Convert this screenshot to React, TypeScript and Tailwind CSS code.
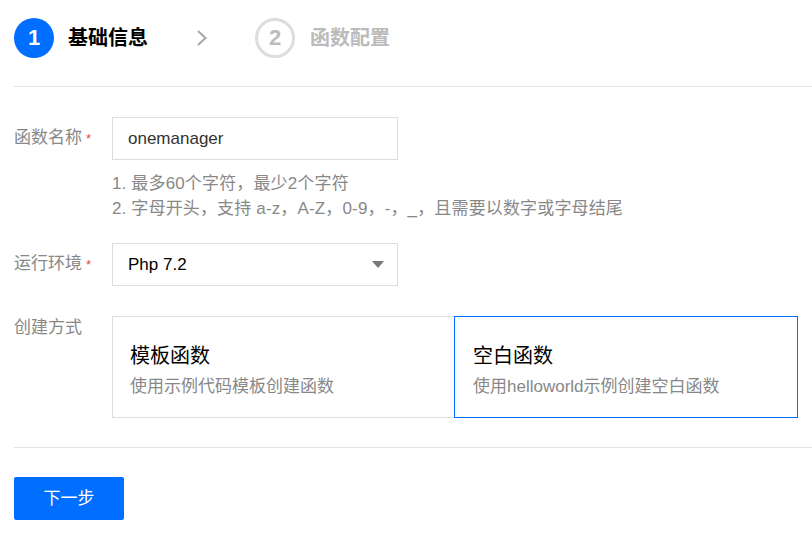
import React from "react";

const font = { fontFamily: '"Liberation Sans", Arial, "Noto Sans CJK SC", sans-serif' };

function Label({ text, required }: { text: string; required?: boolean }) {
  return (
    <div className="w-[98px] shrink-0 text-[17px] text-[#888] flex items-center h-[42px]">
      <span>{text}</span>
      {required && <span className="text-[#e54545] ml-[4px] text-[13px] mt-[2px]">*</span>}
    </div>
  );
}

export default function App() {
  return (
    <div className="w-[812px] h-[533px] bg-white pl-[14px] overflow-hidden" style={font}>
      {/* Steps */}
      <div className="flex items-center pt-[18px] h-[87px] border-b border-[#e2e2e2] pb-[29px]">
        <div className="w-[40px] h-[40px] rounded-full bg-[#006eff] text-white flex items-center justify-center text-[22px] font-bold">1</div>
        <div className="ml-[14px] text-[20px] font-bold text-black">基础信息</div>
        <svg className="ml-[47px]" width="14" height="18" viewBox="0 0 14 18">
          <path d="M3 2 L10.5 9 L3 16" fill="none" stroke="#aaa" strokeWidth="2.2" />
        </svg>
        <div className="ml-[46px] w-[40px] h-[40px] rounded-full border-[3px] border-[#ddd] text-[#bbb] flex items-center justify-center text-[22px] font-bold">2</div>
        <div className="ml-[15px] text-[20px] font-bold text-[#bbb]">函数配置</div>
      </div>

      {/* Form */}
      <div className="pt-[30px]">
        <div className="flex">
          <Label text="函数名称" required />
          <div>
            <div className="w-[286px] h-[43px] border border-[#ddd] flex items-center px-[15px] text-[17px] text-[#333]">onemanager</div>
            <div className="mt-[11px] text-[17px] leading-[25px] text-[#888] whitespace-nowrap tracking-[0.15px]">
              <div>1. 最多60个字符，最少2个字符</div>
              <div>2. 字母开头，支持 a-z，A-Z，0-9，-，_，且需要以数字或字母结尾</div>
            </div>
          </div>
        </div>

        <div className="flex mt-[22px]">
          <Label text="运行环境" required />
          <div className="w-[286px] h-[43px] border border-[#ddd] flex items-center justify-between pl-[15px] pr-[13px] text-[17px] text-black">
            <span>Php 7.2</span>
            <svg width="12" height="8" viewBox="0 0 12 8">
              <path d="M0 0 L12 0 L6 7 Z" fill="#777" />
            </svg>
          </div>
        </div>

        <div className="flex mt-[30px]">
          <div className="w-[98px] shrink-0 text-[17px] text-[#888] leading-[24px]">创建方式</div>
          <div className="flex">
            <div className="w-[342px] h-[102px] border border-[#ddd] border-r-0 pl-[17px] pt-[25px]">
              <div className="text-[20px] text-black leading-[28px]">模板函数</div>
              <div className="text-[17px] text-[#888] mt-[5px] leading-[24px]">使用示例代码模板创建函数</div>
            </div>
            <div className="w-[344px] h-[102px] border border-[#006eff] pl-[18px] pt-[25px]">
              <div className="text-[20px] text-black leading-[28px]">空白函数</div>
              <div className="text-[17px] text-[#888] mt-[5px] leading-[24px]">使用helloworld示例创建空白函数</div>
            </div>
          </div>
        </div>

        <div className="mt-[29px] border-t border-[#e2e2e2] pt-[29px]">
          <button className="w-[110px] h-[43px] bg-[#006eff] text-white text-[17px] rounded-[2px]">下一步</button>
        </div>
      </div>
    </div>
  );
}
